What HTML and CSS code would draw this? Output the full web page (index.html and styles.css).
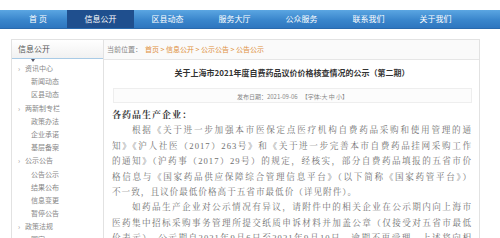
FILE: index.html
```html
<!DOCTYPE html>
<html lang="zh-CN">
<head>
<meta charset="utf-8">
<title>信息公开</title>
<link rel="stylesheet" href="styles.css">
</head>
<body>
<div class="topband"></div>
<nav class="nav">
  <a class="nav-item">首 页</a>
  <a class="nav-item active">信息公开</a>
  <a class="nav-item">区县动态</a>
  <a class="nav-item">服务大厅</a>
  <a class="nav-item">公众服务</a>
  <a class="nav-item">联系我们</a>
  <a class="nav-item">关于我们</a>
</nav>
<div class="page">
  <aside class="side">
    <div class="side-head">信息公开<span class="side-mark"></span></div>
    <ul class="side-list">
      <li class="lv1">资讯中心</li>
      <li class="lv2">新闻动态</li>
      <li class="lv2">区县动态</li>
      <li class="lv1">两新制专栏</li>
      <li class="lv2">政策办法</li>
      <li class="lv2">企业承诺</li>
      <li class="lv2">基层备案</li>
      <li class="lv1">公示公告</li>
      <li class="lv2">公告公示</li>
      <li class="lv2">结果公布</li>
      <li class="lv2">信息变更</li>
      <li class="lv2">暂停公告</li>
      <li class="lv1">政策法规</li>
      <li class="lv2">国家</li>
    </ul>
  </aside>
  <main class="main">
    <div class="crumb">当前位置：<span class="crumb-links">首页 &gt; 信息公开 &gt; 公示公告 &gt; 公告公示</span></div>
    <div class="article">
      <h1 class="title">关于上海市2021年度自费药品议价价格核查情况的公示（第二期）</h1>
      <div class="meta">发布日期：2021-09-06&nbsp;&nbsp;&nbsp;【字体:大 中 小】</div>
      <div class="body">
        <p class="greet">各药品生产企业：</p>
        <p class="para">
          <span class="ln first">根据《关于进一步加强本市医保定点医疗机构自费药品采购和使用管理的通</span>
          <span class="ln">知》《沪人社医（2017）263号》和《关于进一步完善本市自费药品挂网采购工作</span>
          <span class="ln">的通知》（沪药事（2017）29号）的规定，经核实，部分自费药品填报的五省市价</span>
          <span class="ln">格信息与《国家药品供应保障综合管理信息平台》（以下简称《国家药管平台》）</span>
          <span class="ln last">不一致，且议价最低价格高于五省市最低价（详见附件）。</span>
        </p>
        <p class="para">
          <span class="ln first">如药品生产企业对公示情况有异议，请附件中的相关企业在公示期内向上海市</span>
          <span class="ln">医药集中招标采购事务管理所提交纸质申诉材料并加盖公章（仅接受对五省市最低</span>
          <span class="ln">价表示）。公示期自2021年9月6日至2021年9月10日，逾期不再受理。上述将向相</span>
        </p>
      </div>
    </div>
  </main>
</div>
</body>
</html>
```

FILE: styles.css
```css
* { box-sizing: border-box; }
html, body { margin: 0; padding: 0; background: #fff; }
body {
  width: 500px;
  height: 238px;
  overflow: hidden;
  font-family: "Noto Sans CJK SC", "Liberation Sans", sans-serif;
  color: #555;
}
.topband { height: 10px; background: #fff; }
.nav {
  height: 19px;
  display: flex;
  background: linear-gradient(#5ba6e2, #3a86cc 55%, #2e76bf);
  border-bottom: 1px solid #2a6aad;
}
.nav-item {
  width: 67px;
  flex: none;
  text-align: center;
  color: #fff;
  font-size: 8px;
  line-height: 18px;
}
.nav-item:first-child { padding-left: 9px; }
.nav-item.active { background: #1f4f8e; }

.page {
  display: flex;
  padding-left: 11px;
  margin-top: 10px;
  padding-right: 20px;
}
.side {
  width: 92px;
  flex: none;
  border: 1px solid #e2e2e2;
  border-right: none;
  height: 210px;
}
.side-head {
  position: relative;
  height: 19px;
  line-height: 18px;
  font-size: 8px;
  color: #555;
  padding-left: 6px;
  background: linear-gradient(#ffffff, #f1f1f1);
  border-bottom: 1px solid #a9cbe6;
}
.side-mark {
  position: absolute;
  left: 19px;
  bottom: -4px;
  width: 0;
  height: 0;
  border-left: 2px solid transparent;
  border-right: 2px solid transparent;
  border-top: 3px solid #556;
}
.side-list {
  list-style: none;
  margin: 0;
  padding: 3px 0 0;
}
.side-list li {
  font-size: 7px;
  line-height: 13.2px;
  height: 13.2px;
  color: #888;
  white-space: nowrap;
}
.side-list .lv1 { padding-left: 13px; position: relative; }
.side-list .lv1::before {
  content: "›";
  position: absolute;
  left: 6px;
  top: 0;
  color: #999;
}
.side-list .lv2 { padding-left: 19px; }

.main {
  width: 377px;
  flex: none;
  border: 1px solid #e2e2e2;
  height: 210px;
}
.crumb {
  height: 20px;
  line-height: 19px;
  font-size: 7px;
  color: #888;
  padding-left: 3px;
  background: #fafafa;
  border-bottom: 1px solid #e6e6e6;
}
.crumb-links { color: #e0913f; margin-left: 3px; }
.article { padding: 7px 7px 0 8px; }
.title {
  margin: 0;
  text-align: center;
  font-size: 8px;
  line-height: 11px;
  font-weight: bold;
  color: #333;
}
.meta {
  margin: 10px 0 0 1px;
  height: 15px;
  line-height: 15px;
  font-size: 6px;
  color: #888;
  text-align: center;
  background: #fcfcfc;
  border: 1px solid #eeeeee;
}
.body {
  margin-top: 5px;
  font-family: "Liberation Serif", "Noto Serif CJK SC", "Noto Sans CJK SC", serif;
  font-size: 8.6px;
  line-height: 15.4px;
  color: #707070;
  letter-spacing: 1px;
}
.body p { margin: 0; }
.greet { font-weight: bold; color: #3a3a3a; font-size: 9px; }
.ln {
  display: block;
  text-align: justify;
  text-align-last: justify;
  white-space: nowrap;
}
.ln.first { padding-left: 20px; }
.ln.last { text-align-last: left; }
```
